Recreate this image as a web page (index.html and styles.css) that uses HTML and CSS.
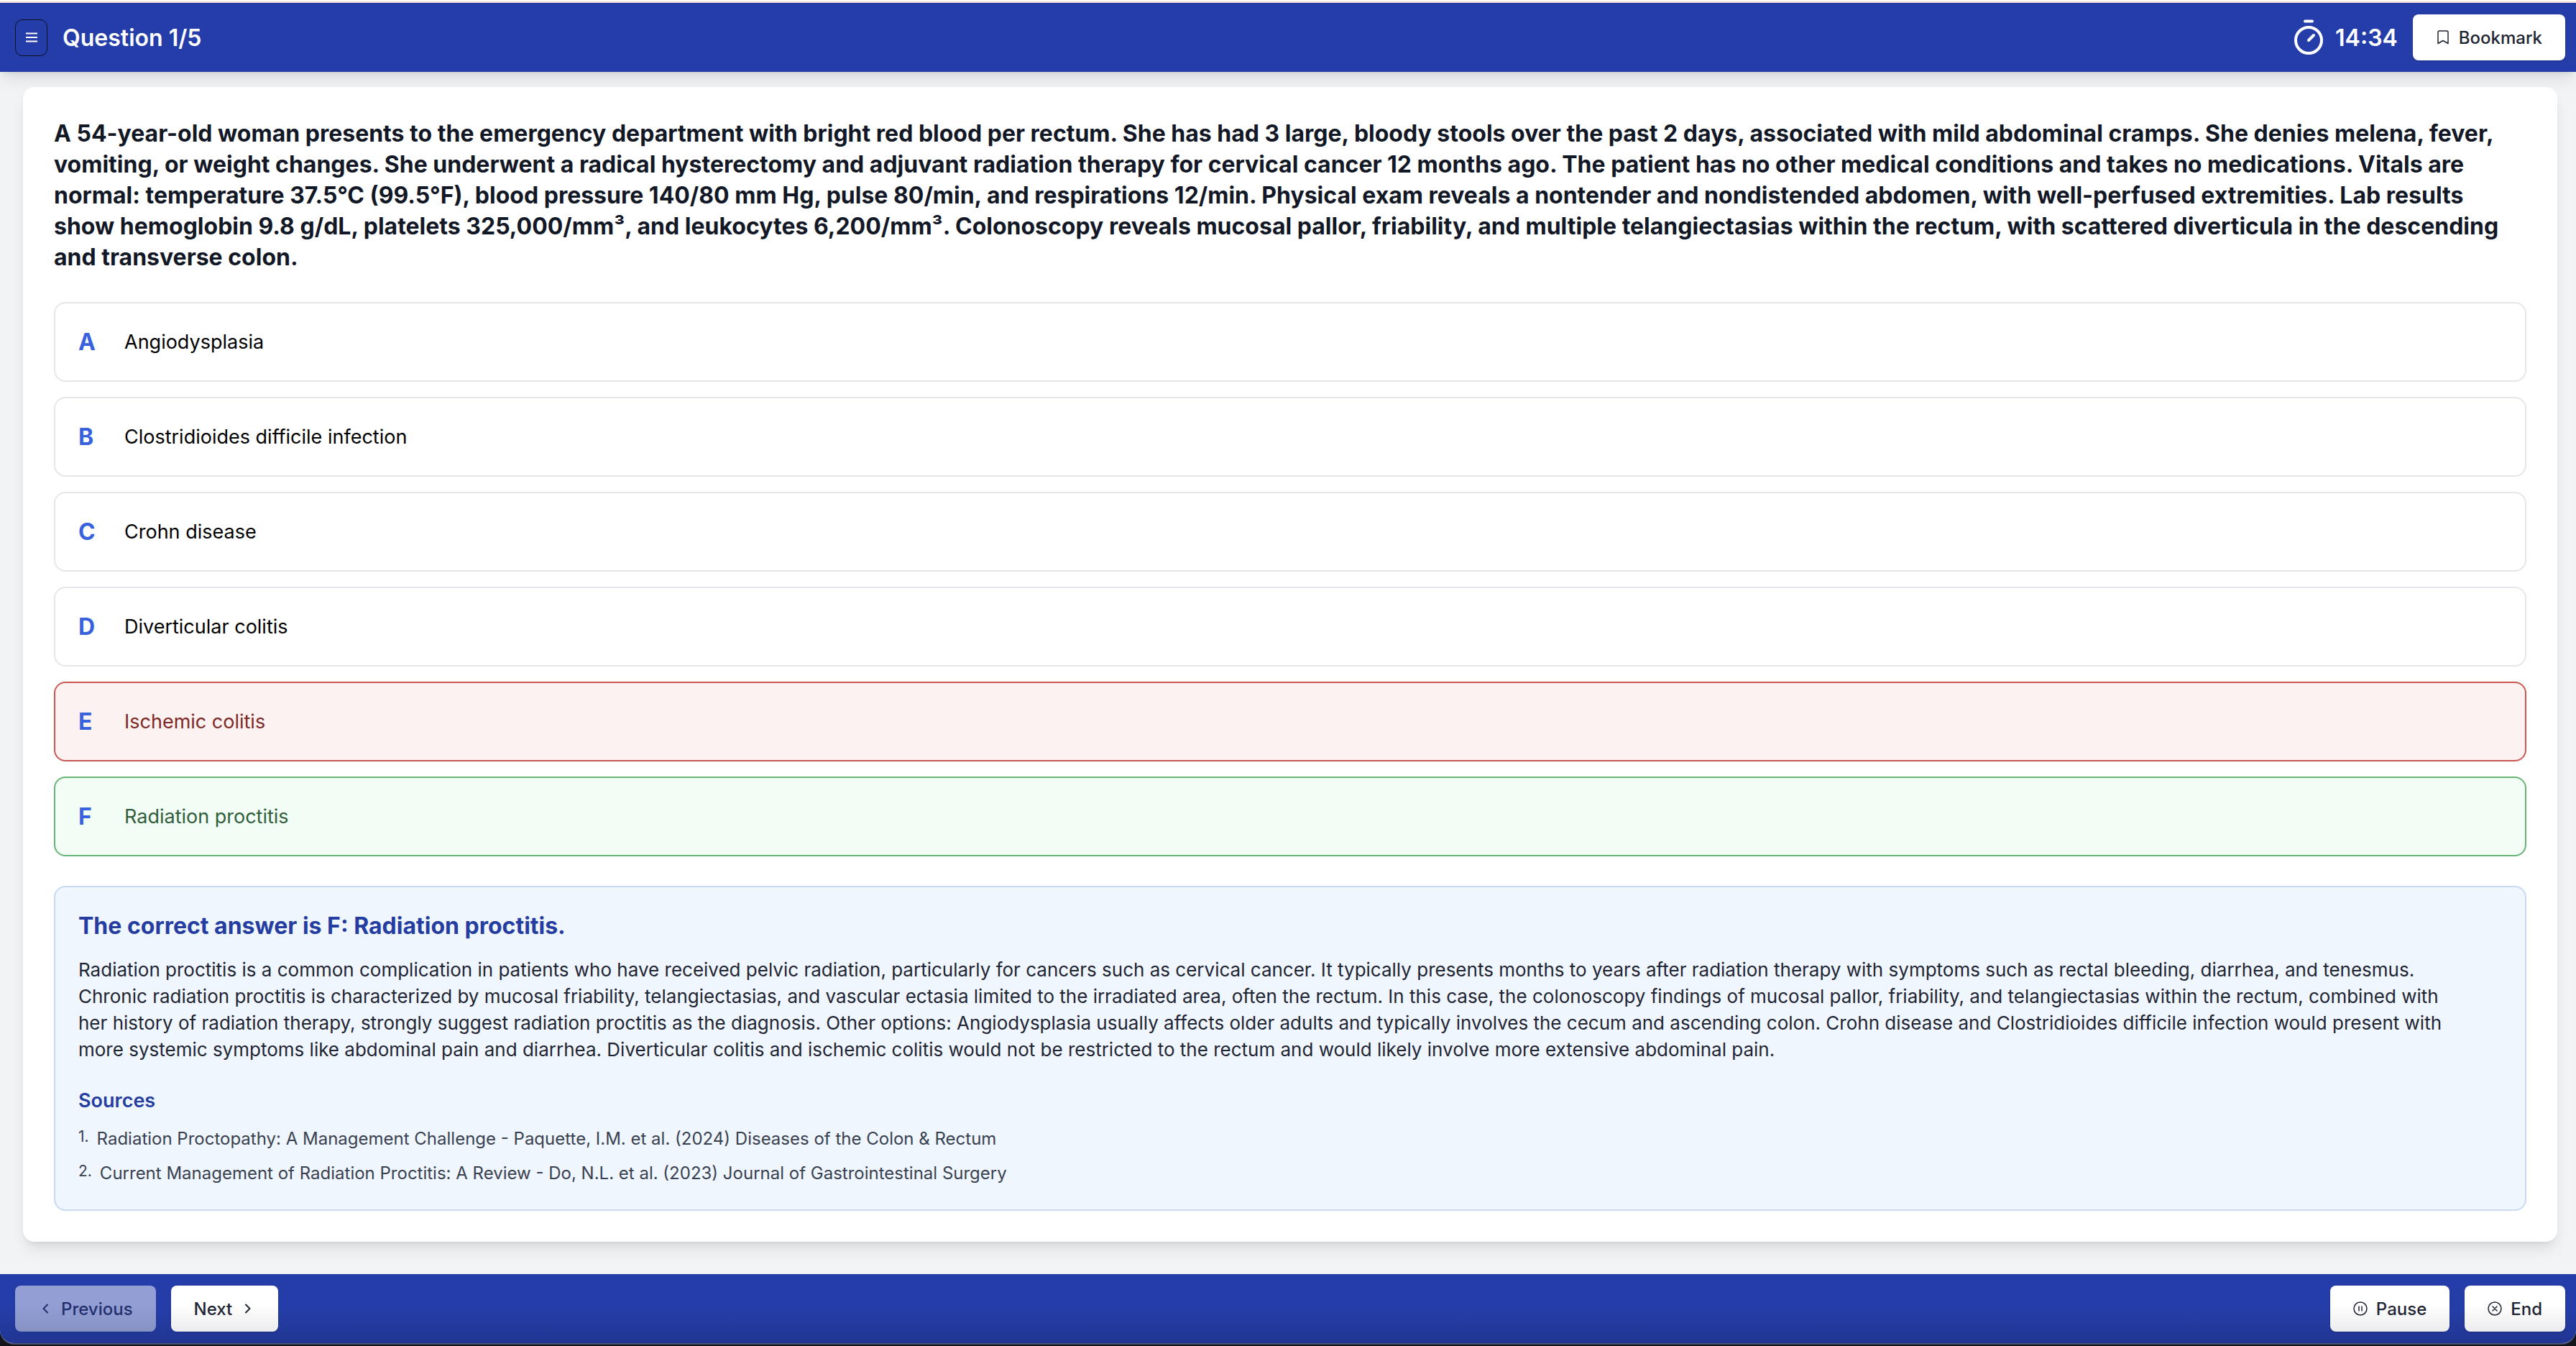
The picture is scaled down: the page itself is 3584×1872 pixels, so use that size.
FILE: index.html
```html
<!DOCTYPE html>
<html lang="en">
<head>
<meta charset="utf-8">
<meta name="viewport" content="width=device-width, initial-scale=1">
<title>Question 1/5</title>
<link rel="stylesheet" href="styles.css">
</head>
<body>
<div class="app">
  <header class="bar bar-top">
    <div class="group">
      <button class="menu-button" type="button" aria-label="Menu">
        <svg class="icon-menu" viewBox="0 0 16 14" fill="none" stroke="currentColor" stroke-width="2"><path d="M0 1.5h16M0 7h16M0 12.5h16"/></svg>
      </button>
      <h1 class="progress">Question 1/5</h1>
    </div>
    <div class="group">
      <div class="timer">
        <svg class="icon-timer" viewBox="0 0 42 50" fill="none" stroke="currentColor" stroke-width="4" stroke-linecap="round"><path d="M16 2.5h10M21 29l7-7"/><circle cx="21" cy="29" r="18"/></svg>
        <span>14:34</span>
      </div>
      <button class="btn" type="button">
        <svg class="icon" viewBox="0 0 20 20" fill="none" stroke="currentColor" stroke-width="1.5" stroke-linejoin="round"><path d="M3 18.500V3a2 2 0 0 1 2-2h10a2 2 0 0 1 2 2v15.500l-7-4z"/></svg>
        Bookmark
      </button>
    </div>
  </header>

  <main class="content">
    <article class="card">
      <h2 class="question">A 54-year-old woman presents to the emergency department with bright red blood per rectum. She has had 3 large, bloody stools over the past 2 days, associated with mild abdominal cramps. She denies melena, fever, vomiting, or weight changes. She underwent a radical hysterectomy and adjuvant radiation therapy for cervical cancer 12 months ago. The patient has no other medical conditions and takes no medications. Vitals are normal: temperature 37.5°C (99.5°F), blood pressure 140/80 mm Hg, pulse 80/min, and respirations 12/min. Physical exam reveals a nontender and nondistended abdomen, with well-perfused extremities. Lab results show hemoglobin 9.8 g/dL, platelets 325,000/mm³, and leukocytes 6,200/mm³. Colonoscopy reveals mucosal pallor, friability, and multiple telangiectasias within the rectum, with scattered diverticula in the descending and transverse colon.</h2>

      <div class="options">
        <button class="option" type="button"><span class="letter">A</span><span>Angiodysplasia</span></button>
        <button class="option" type="button"><span class="letter">B</span><span>Clostridioides difficile infection</span></button>
        <button class="option" type="button"><span class="letter">C</span><span>Crohn disease</span></button>
        <button class="option" type="button"><span class="letter">D</span><span>Diverticular colitis</span></button>
        <button class="option option-wrong" type="button"><span class="letter">E</span><span>Ischemic colitis</span></button>
        <button class="option option-right" type="button"><span class="letter">F</span><span>Radiation proctitis</span></button>
      </div>

      <section class="explanation">
        <h3 class="answer">The correct answer is F: Radiation proctitis.</h3>
        <p class="reason">Radiation proctitis is a common complication in patients who have received pelvic radiation, particularly for cancers such as cervical cancer. It typically presents months to years after radiation therapy with symptoms such as rectal bleeding, diarrhea, and tenesmus. Chronic radiation proctitis is characterized by mucosal friability, telangiectasias, and vascular ectasia limited to the irradiated area, often the rectum. In this case, the colonoscopy findings of mucosal pallor, friability, and telangiectasias within the rectum, combined with her history of radiation therapy, strongly suggest radiation proctitis as the diagnosis. Other options: Angiodysplasia usually affects older adults and typically involves the cecum and ascending colon. Crohn disease and Clostridioides difficile infection would present with more systemic symptoms like abdominal pain and diarrhea. Diverticular colitis and ischemic colitis would not be restricted to the rectum and would likely involve more extensive abdominal pain.</p>
        <h4 class="sources-title">Sources</h4>
        <ol class="sources">
          <li><span class="num">1.</span>Radiation Proctopathy: A Management Challenge - Paquette, I.M. et al. (2024) Diseases of the Colon &amp; Rectum</li>
          <li><span class="num">2.</span>Current Management of Radiation Proctitis: A Review - Do, N.L. et al. (2023) Journal of Gastrointestinal Surgery</li>
        </ol>
      </section>
    </article>
  </main>

  <footer class="bar bar-bottom">
    <div class="group">
      <button class="btn btn-shaded" type="button" disabled>
        <svg class="icon" viewBox="0 0 20 20" fill="none" stroke="currentColor" stroke-width="2" stroke-linecap="round" stroke-linejoin="round"><path d="M13 4.500L7.500 10l5.500 5.500"/></svg>
        Previous
      </button>
      <button class="btn btn-shaded" type="button">
        Next
        <svg class="icon" viewBox="0 0 20 20" fill="none" stroke="currentColor" stroke-width="2" stroke-linecap="round" stroke-linejoin="round"><path d="M7 4.500l5.500 5.500L7 15.500"/></svg>
      </button>
    </div>
    <div class="group">
      <button class="btn btn-shaded" type="button">
        <svg class="icon" viewBox="0 0 20 20" fill="none" stroke="currentColor" stroke-width="1.500"><circle cx="10" cy="10" r="9"/><path d="M8 6.500v7M12 6.500v7"/></svg>
        Pause
      </button>
      <button class="btn btn-shaded" type="button">
        <svg class="icon" viewBox="0 0 20 20" fill="none" stroke="currentColor" stroke-width="1.500" stroke-linecap="round"><circle cx="10" cy="10" r="9"/><path d="M7 7l6 6M13 7l-6 6"/></svg>
        End
      </button>
    </div>
  </footer>
</div>
</body>
</html>
```

FILE: styles.css
```css
* {
  box-sizing: border-box;
  margin: 0;
  padding: 0;
}

body {
  background: #141519;
  color: #1f2533;
  font-family: "Inter", "Liberation Sans", sans-serif;
}

button {
  border: 0;
  font: inherit;
  color: inherit;
}

.app {
  display: flex;
  flex-direction: column;
  min-height: calc(100vh - 2px);
  margin-bottom: 2px;
  overflow: hidden;
  background: #f2f3f5;
  border-top: 2px solid #fdf8f3;
  border-bottom: 2px solid #4a5070;
  border-radius: 0 0 20px 20px;
}

.bar {
  display: flex;
  align-items: center;
  justify-content: space-between;
  padding: 16px 15px 16px 21px;
  background: #253da8;
}

.bar-top {
  border-top: 2px solid #f0dedd;
  color: #ffffff;
  box-shadow: 0 13px 20px -4px rgba(0, 0, 0, 0.1), 0 5px 8px -5px rgba(0, 0, 0, 0.1);
}

.bar-bottom {
  background: linear-gradient(#253da8 50%, #213692);
}

.group {
  display: flex;
  align-items: center;
  gap: 21px;
}

.menu-button {
  display: flex;
  align-items: center;
  justify-content: center;
  width: 45px;
  height: 51px;
  background: transparent;
  border: 1px solid #0b1020;
  border-radius: 10px;
}

.icon-menu {
  width: 16px;
  height: 14px;
}

.progress,
.timer {
  font-size: 32px;
  line-height: 43px;
  font-weight: 600;
}

.timer {
  display: flex;
  align-items: center;
  gap: 16px;
}

.icon-timer {
  width: 42px;
  height: 50px;
}

.btn {
  display: flex;
  align-items: center;
  gap: 12px;
  height: 64px;
  padding: 0 32px;
  background: #ffffff;
  border-radius: 8px;
  box-shadow: 0 1px 3px rgba(0, 0, 0, 0.2);
  color: #1f2533;
  font-size: 24px;
  font-weight: 500;
}

.btn-shaded {
  background: linear-gradient(#ffffff 40%, #ececee);
}

.btn:disabled {
  opacity: 0.5;
}

.icon {
  width: 20px;
  height: 20px;
}

.content {
  flex: 1;
  padding: 21px 26px 43px 32px;
}

.card {
  padding: 43px;
  background: #ffffff;
  border-radius: 16px;
  box-shadow: 0 13px 20px -4px rgba(0, 0, 0, 0.1), 0 5px 8px -5px rgba(0, 0, 0, 0.1);
}

.question {
  margin-bottom: 41px;
  color: #131826;
  font-size: 32px;
  line-height: 43px;
  font-weight: 700;
}

.options {
  display: grid;
  gap: 21px;
}

.option {
  display: flex;
  align-items: center;
  height: 111px;
  padding: 0 32px;
  background: #ffffff;
  border: 2px solid #e5e6ea;
  border-radius: 16px;
  color: #000000;
  font-size: 27px;
  text-align: left;
}

.letter {
  width: 64px;
  color: #3862dd;
  font-size: 32px;
  font-weight: 700;
}

.option-wrong {
  background: #fcf2f1;
  border-color: #cb5753;
  color: #7e2926;
}

.option-right {
  background: #f2fdf5;
  border-color: #66b575;
  color: #315f3c;
}

.explanation {
  margin-top: 41px;
  padding: 32px;
  background: #eff6fe;
  border: 2px solid #c8d9f3;
  border-radius: 16px;
}

.answer,
.sources-title {
  color: #253da0;
}

.answer {
  margin-bottom: 21px;
  font-size: 32px;
  line-height: 43px;
  font-weight: 700;
}

.reason {
  padding-right: 64px;
  font-size: 26px;
  line-height: 37px;
}

.sources-title {
  margin-top: 34px;
  margin-bottom: 16px;
  font-size: 27px;
  line-height: 37px;
  font-weight: 600;
}

.sources {
  display: grid;
  gap: 11px;
  list-style: none;
  color: #394150;
  font-size: 24px;
  line-height: 37px;
}

.sources li {
  display: flex;
  align-items: flex-start;
  gap: 11px;
}

.num {
  font-size: 21px;
  line-height: 32px;
}
```
